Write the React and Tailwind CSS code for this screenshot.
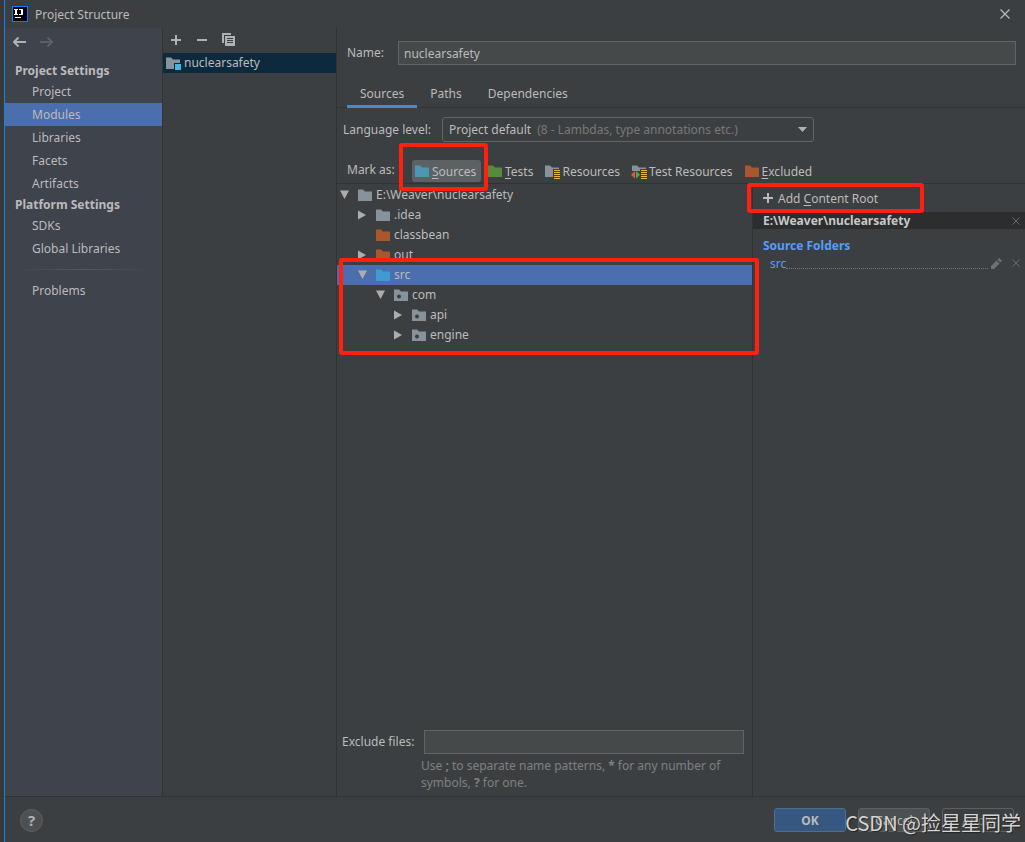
import React, { useState } from "react";

const settingsGroups = [
  { title: "Project Settings", items: ["Project", "Modules", "Libraries", "Facets", "Artifacts"] },
  { title: "Platform Settings", items: ["SDKs", "Global Libraries"] },
];

const FolderIcon = ({ className = "text-[#87939a]", children }) => (
  <svg viewBox="0 0 16 16" className={`h-4 w-4 shrink-0 ${className}`} aria-hidden="true">
    <path d="M1 2.5h5l2 2h7V14H1z" fill="currentColor" />
    {children}
  </svg>
);

const PackageIcon = () => (
  <FolderIcon>
    <circle cx="6" cy="9.5" r="2" fill="#3c3f41" />
  </FolderIcon>
);

const ModuleIcon = () => (
  <FolderIcon>
    <path d="M9 8h7v8H9z" fill="#0d293e" />
    <path d="M10 9h6v6h-6z" fill="#40b6e0" />
  </FolderIcon>
);

const ResourceLines = () => (
  <>
    <path d="M9 6h7v10H9z" fill="#3c3f41" />
    <path d="M10 7.5h6M10 9.5h6M10 11.5h6M10 13.5h6M10 15.5h6" stroke="#f0b23a" strokeWidth="1.2" fill="none" />
  </>
);

const ResourcesIcon = () => (
  <FolderIcon>
    <ResourceLines />
  </FolderIcon>
);

const TestResourcesIcon = () => (
  <FolderIcon>
    <path d="M0 8h9v8H0z" fill="#3c3f41" />
    <ResourceLines />
    <path d="M4 8v7.5L0 11.75z" fill="#f05a28" />
    <path d="M5 8v7.5l4-3.75z" fill="#4fb04a" />
  </FolderIcon>
);

const PlusIcon = () => (
  <svg viewBox="0 0 12 12" className="h-3 w-3" aria-hidden="true">
    <path d="M5 1h2v4h4v2H7v4H5V7H1V5h4z" fill="currentColor" />
  </svg>
);

const CloseIcon = ({ className }) => (
  <svg viewBox="0 0 10 10" className={className} aria-hidden="true">
    <path d="M0.5 0.5l9 9M9.5 0.5l-9 9" stroke="currentColor" strokeWidth="1.2" fill="none" />
  </svg>
);

const BackArrow = () => (
  <svg viewBox="0 0 14 10" className="h-[10px] w-[14px]" aria-hidden="true">
    <path d="M13 5H1M5.5 0.5L1 5l4.5 4.5" stroke="currentColor" strokeWidth="2" fill="none" />
  </svg>
);

const Expander = ({ open }) => (
  <svg viewBox="0 0 10 10" className="h-[10px] w-[10px] text-[#adadad]" aria-hidden="true">
    <path d={open ? "M0 0.5h9L4.5 9z" : "M0 0.5v9L8 5z"} fill="currentColor" />
  </svg>
);

const RedBox = ({ className }) => (
  <span
    className={`pointer-events-none absolute z-10 rounded-[3px] border-4 border-[#ff2010] ${className}`}
  />
);

const NavItem = ({ name, active, onSelect }) => (
  <li>
    <button
      onClick={() => onSelect(name)}
      className={`block h-[23px] w-full pl-[27px] text-left leading-[23px] ${active ? "bg-[#4b6eaf]" : ""}`}
    >
      {name}
    </button>
  </li>
);

const Sidebar = () => {
  const [selected, setSelected] = useState("Modules");

  return (
    <nav className="w-[158px] shrink-0 border-r border-[#323232] bg-[#3f434c]">
      <div className="flex h-[33px] items-center gap-3 pb-[5px] pl-2">
        <button aria-label="Back" className="text-[#afb1b3]"><BackArrow /></button>
        <button aria-label="Forward" disabled className="-scale-x-100 text-[#5c5f63]"><BackArrow /></button>
      </div>
      {settingsGroups.map((group) => (
        <section key={group.title}>
          <h2 className="h-[19px] pl-[10px] font-bold leading-[19px]">{group.title}</h2>
          <ul>
            {group.items.map((item) => (
              <NavItem key={item} name={item} active={item === selected} onSelect={setSelected} />
            ))}
          </ul>
        </section>
      ))}
      <div className="mx-2 my-[9px] h-px bg-linear-to-r from-transparent via-[#55585f] to-transparent" />
      <ul>
        <NavItem name="Problems" active={selected === "Problems"} onSelect={setSelected} />
      </ul>
    </nav>
  );
};

const ModuleList = () => (
  <section className="w-[174px] shrink-0 border-r border-[#323232]">
    <div className="flex h-[25px] items-center gap-[14px] pb-[2px] pl-[7px] text-[#afb1b3]">
      <button aria-label="Add"><PlusIcon /></button>
      <button aria-label="Remove">
        <svg viewBox="0 0 12 12" className="h-3 w-3" aria-hidden="true">
          <path d="M1 5h10v2H1z" fill="currentColor" />
        </svg>
      </button>
      <button aria-label="Copy">
        <svg viewBox="0 0 13 13" className="h-[13px] w-[13px]" aria-hidden="true">
          <path d="M0 0h9v2H2v8H0z" fill="currentColor" />
          <path d="M3 3h10v10H3zM5 5v1h6V5zm0 2v1h6V7zm0 2v1h6V9z" fill="currentColor" fillRule="evenodd" />
        </svg>
      </button>
    </div>
    <button className="flex h-5 w-full items-center gap-[3px] bg-[#0d293e] pl-[2px] leading-5">
      <ModuleIcon />
      nuclearsafety
    </button>
  </section>
);

const Tabs = () => {
  const [tab, setTab] = useState("Sources");

  return (
    <div role="tablist" className="flex h-[29px] border-b border-[#323232] pl-[10px]">
      {["Sources", "Paths", "Dependencies"].map((name) => (
        <button
          key={name}
          role="tab"
          aria-selected={tab === name}
          onClick={() => setTab(name)}
          className={`h-[29px] border-b-[3px] px-[13px] pt-1 ${tab === name ? "border-[#4a88c7]" : "border-transparent"}`}
        >
          {name}
        </button>
      ))}
    </div>
  );
};

const MarkButton = ({ icon, label, mnemonic, className = "" }) => (
  <button className={`flex h-[22px] items-center gap-[2px] rounded-[3px] px-[2px] ${className}`}>
    {icon}
    <span className="pt-[2px]">
      {mnemonic ? <u className="underline-offset-2">{label[0]}</u> : label[0]}
      {label.slice(1)}
    </span>
  </button>
);

const MarkAs = () => (
  <div className="flex h-[42px] items-end border-b border-[#323232] pb-px pl-[10px]">
    <span className="h-[22px] w-[65px] leading-5">Mark as:</span>
    <div className="relative mr-1">
      <MarkButton
        icon={<FolderIcon className="text-[#4b98b5]" />}
        label="Sources"
        mnemonic
        className="w-[69px] bg-[#5c6164]"
      />
      <RedBox className="-bottom-[9px] -left-[13px] -right-[7px] -top-[17px]" />
    </div>
    <div className="flex gap-[7px]">
      <MarkButton icon={<FolderIcon className="text-[#568a3f]" />} label="Tests" mnemonic />
      <MarkButton icon={<ResourcesIcon />} label="Resources" />
      <MarkButton icon={<TestResourcesIcon />} label="Test Resources" />
      <MarkButton icon={<FolderIcon className="text-[#a9572d]" />} label="Excluded" mnemonic />
    </div>
  </div>
);

const TreeRow = ({ name, icon, open, indent, selected }) => (
  <li
    role="treeitem"
    aria-expanded={open}
    aria-selected={!!selected}
    className={`flex h-5 items-center leading-5 ${indent} ${selected ? "bg-[#4b6eaf]" : ""}`}
  >
    <span className="w-[17px]">{open !== undefined && <Expander open={open} />}</span>
    {icon}
    <span className="ml-[3px]">{name}</span>
  </li>
);

const FileTree = () => (
  <div role="tree" className="pt-px">
    <ul role="group">
      <TreeRow name="E:\Weaver\nuclearsafety" icon={<FolderIcon />} open indent="pl-[3px]" />
      <TreeRow name=".idea" icon={<FolderIcon />} open={false} indent="pl-[21px]" />
      <TreeRow name="classbean" icon={<FolderIcon className="text-[#a9572d]" />} indent="pl-[21px]" />
      <TreeRow name="out" icon={<FolderIcon className="text-[#a9572d]" />} open={false} indent="pl-[21px]" />
    </ul>
    <div className="relative">
      <ul role="group">
        <TreeRow name="src" icon={<FolderIcon className="text-[#3f9bd0]" />} open selected indent="pl-[21px]" />
        <TreeRow name="com" icon={<PackageIcon />} open indent="pl-[39px]" />
        <TreeRow name="api" icon={<PackageIcon />} open={false} indent="pl-[57px]" />
        <TreeRow name="engine" icon={<PackageIcon />} open={false} indent="pl-[57px]" />
      </ul>
      <RedBox className="-bottom-[10px] -right-[7px] -top-[7px] left-[2px]" />
    </div>
  </div>
);

const ContentRoots = () => (
  <section className="w-[272px] shrink-0">
    <div className="relative h-7">
      <button className="flex h-7 items-center gap-1 pl-[9px]">
        <PlusIcon />
        <span className="pt-[2px]">Add <u className="underline-offset-2">C</u>ontent Root</span>
      </button>
      <RedBox className="-bottom-px -left-[6px] -top-px right-[101px]" />
    </div>
    <div className="flex h-[17px] items-center justify-between bg-[#2b2d2e] pl-[10px] pr-[5px]">
      <h3 className="font-bold leading-[17px] text-[#c8c8c8]">E:\Weaver\nuclearsafety</h3>
      <button aria-label="Remove content root" className="text-[#6e6e6e]">
        <CloseIcon className="h-2 w-2" />
      </button>
    </div>
    <h3 className="mt-2 h-[18px] pl-[10px] font-bold leading-[18px] text-[#589df6]">Source Folders</h3>
    <div className="flex h-[18px] items-center pl-[17px] pr-[5px] leading-[18px]">
      <a href="#src" className="text-[#589df6]">src</a>
      <span className="mr-[3px] h-[10px] grow border-b border-dotted border-[#76797b]" />
      <button aria-label="Edit properties" className="mr-[10px] pb-[2px] text-[#6e7173]">
        <svg viewBox="0 0 11 11" className="h-[11px] w-[11px]" aria-hidden="true">
          <path d="M0 11V8l5.5-5.5 3 3L3 11zM6.5 1.8L8.2 0 11 2.8 9.3 4.5z" fill="currentColor" />
        </svg>
      </button>
      <button aria-label="Remove source folder" className="pb-[2px] text-[#6e6e6e]">
        <CloseIcon className="h-2 w-2" />
      </button>
    </div>
  </section>
);

const ModuleEditor = () => (
  <main className="flex min-w-0 grow flex-col">
    <div className="flex items-center pb-[14px] pl-[10px] pr-[9px] pt-[13px]">
      <label htmlFor="name" className="w-[51px]">Name:</label>
      <input
        id="name"
        defaultValue="nuclearsafety"
        className="h-6 min-w-0 grow border border-[#646464] bg-[#45494a] px-[5px] outline-none"
      />
    </div>
    <Tabs />
    <div className="flex items-center pl-[6px] pt-[9px]">
      <label htmlFor="level" className="w-[99px]">Language level:</label>
      <div className="flex h-[25px] w-[372px] items-center rounded-[3px] border border-[#646464] pl-[6px] pr-[6px]">
        <select id="level" className="field-sizing-content appearance-none outline-none">
          <option>Project default</option>
        </select>
        <span className="ml-[6px] grow whitespace-nowrap text-[#787878]">(8 - Lambdas, type annotations etc.)</span>
        <svg viewBox="0 0 9 5" className="h-[5px] w-[9px] text-[#afb1b3]" aria-hidden="true">
          <path d="M0 0h9L4.5 5z" fill="currentColor" />
        </svg>
      </div>
    </div>
    <MarkAs />
    <div className="flex grow">
      <section className="flex min-w-0 grow flex-col justify-between border-r border-[#323232]">
        <FileTree />
        <div className="grid grid-cols-[auto_1fr] items-center pb-[5px] pl-[5px] pr-2">
          <label htmlFor="exclude" className="w-[82px]">Exclude files:</label>
          <input
            id="exclude"
            className="h-6 min-w-0 border border-[#646464] bg-[#45494a] px-[5px] outline-none"
          />
          <p className="col-start-2 -ml-[3px] mt-[3px] leading-[17px] text-[#808080]">
            Use <b>;</b> to separate name patterns, <b>*</b> for any number of symbols, <b>?</b> for one.
          </p>
        </div>
      </section>
      <ContentRoots />
    </div>
  </main>
);

const Footer = () => (
  <footer className="relative flex h-[46px] items-center justify-between border-t border-[#323232] pl-[15px] pr-[11px] pt-px">
    <button
      aria-label="Help"
      className="h-[23px] w-[23px] rounded-full border border-[#5e6060] bg-[#4c5052] text-[15px] font-bold leading-5 text-[#afb1b3]"
    >
      ?
    </button>
    <div className="flex gap-3">
      <button className="h-6 w-[72px] rounded-[3px] border border-[#4c708c] bg-[#365880] pt-[2px] font-bold">OK</button>
      <button className="h-6 w-[72px] rounded-[3px] border border-[#5e6060] bg-[#4c5052] pt-[2px]">Cancel</button>
      <button disabled className="h-6 w-[72px] rounded-[3px] border border-[#5e6060] pt-[2px] text-[#777777]">
        Apply
      </button>
    </div>
    <span className="pointer-events-none absolute bottom-[5px] right-1 whitespace-nowrap font-['Noto_Sans_CJK_SC',sans-serif] text-[20px] leading-7 text-[#d4d4d4] [text-shadow:1px_1px_1px_#222]">
      CSDN @捡星星同学
    </span>
  </footer>
);

const App = () => (
  <div className="flex min-h-screen bg-[#3c3f41] font-['Noto_Sans',sans-serif] text-[12px] leading-5 text-[#bbbbbb]">
    <div className="w-[5px] shrink-0 border-r border-[#1883d7] bg-[#36393b]" />
    <div className="flex min-w-0 grow flex-col">
      <header className="flex h-7 items-center pl-[7px] pr-[15px]">
        <svg viewBox="0 0 16 16" className="mr-[7px] h-4 w-4" aria-hidden="true">
          <path d="M0 0h16v16H0z" fill="#087cfa" />
          <path d="M1 1h14v14H1z" fill="#000" />
          <path
            d="M2 3h4v1H5v4h1v1H2V8h1V4H2zM7 3h4v5q0 1-1 1H7V8h2V4H7zM3 11h6v1H3z"
            fill="#fff"
          />
        </svg>
        <h1 className="grow pt-[2px]">Project Structure</h1>
        <button aria-label="Close">
          <CloseIcon className="h-[10px] w-[10px]" />
        </button>
      </header>
      <div className="flex grow">
        <Sidebar />
        <ModuleList />
        <ModuleEditor />
      </div>
      <Footer />
    </div>
  </div>
);

export default App;
